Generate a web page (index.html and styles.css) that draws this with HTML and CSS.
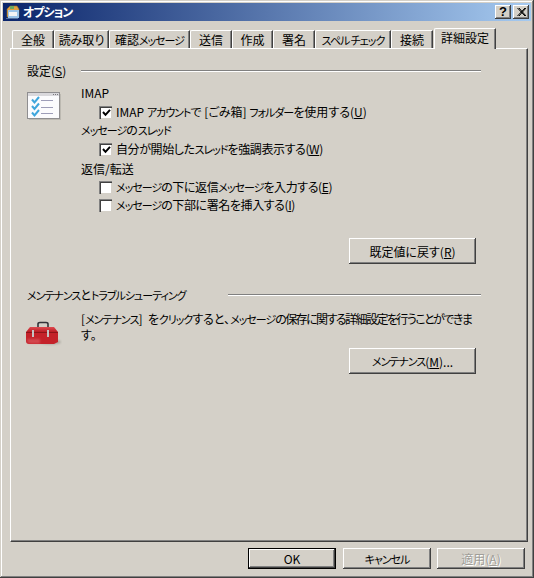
FILE: index.html
```html
<!DOCTYPE html>
<html lang="ja">
<head>
<meta charset="utf-8">
<title>オプション</title>
<link rel="stylesheet" href="styles.css">
</head>
<body>
<div class="window">
  <header class="titlebar">
    <svg class="app-icon" viewBox="0 0 16 16" width="16" height="16">
      <path d="M2 5 L5 2 H12 L14 5 V13 H2 Z" fill="#e0a040" stroke="#8a6a2a" stroke-width="0.6"/>
      <path d="M5 2 H9 V5 H5 Z" fill="#6aa860"/>
      <path d="M3 6 H14 V14 H3 Z" fill="#9cc4e8"/>
      <path d="M4 8 H12 V12 H4 Z" fill="#f4f4f4"/>
      <path d="M1 14 H13 V15 H1 Z" fill="#54709c"/>
    </svg>
    <span class="title">オプション</span>
    <div class="caption-buttons">
      <span class="caption-btn">?</span>
      <span class="caption-btn close">
        <svg viewBox="0 0 9 8" width="9" height="8"><path d="M0.5 0 L8 8 M2 0 L9 8 M8 0 L0.5 8 M9 0 L2 8" stroke="#000" stroke-width="1" fill="none"/></svg>
      </span>
    </div>
  </header>
  <nav class="tabs">
    <span class="tab">全般</span>
    <span class="tab">読み取り</span>
    <span class="tab">確認<span class="k">メッセージ</span></span>
    <span class="tab">送信</span>
    <span class="tab">作成</span>
    <span class="tab">署名</span>
    <span class="tab"><span class="k">スペル チェック</span></span>
    <span class="tab">接続</span>
    <span class="tab active">詳細設定</span>
  </nav>
  <main class="panel">
    <div class="group-head"><span>設定(<u>S</u>)</span><i class="rule first"></i></div>
    <section class="group">
      <svg class="big-icon list-icon" viewBox="0 0 34 28" width="34" height="28">
        <rect x="2" y="2" width="32" height="26" fill="#bcb9b1"/>
        <rect x="0.5" y="0.5" width="32" height="26" fill="#fbfbfd" stroke="#8f8e90"/>
        <rect x="1" y="1" width="31" height="3" fill="#d9d8dc"/>
        <path d="M26 2.5h1M28 2.5h1M30 2.5h1" stroke="#77777c"/>
        <path d="M5 7.5 L7.5 10.5 L12 5 M5 14 L7.5 17 L12 11.5 M5 20.5 L7.5 23.5 L12 18" fill="none" stroke="#3fa6dc" stroke-width="2"/>
        <path d="M14 8.5H26M14 15.5H26M14 21.5H26" stroke="#9d9db8" stroke-width="1"/>
      </svg>
      <div class="group-body">
        <div class="row">IMAP</div>
        <div class="row option gap1"><span class="check on"><svg viewBox="0 0 9 9" width="9" height="9"><path d="M1 4 L3.5 6.8 L8 1.8" fill="none" stroke="#000" stroke-width="2"/></svg></span><span>IMAP <span class="k">アカウント</span>で [ごみ箱] <span class="k">フォルダー</span>を使用する(<u>U</u>)</span></div>
        <div class="row"><span><span class="k">メッセージ</span>の<span class="k">スレッド</span></span></div>
        <div class="row option gap1"><span class="check on"><svg viewBox="0 0 9 9" width="9" height="9"><path d="M1 4 L3.5 6.8 L8 1.8" fill="none" stroke="#000" stroke-width="2"/></svg></span><span class="tight">自分が開始した<span class="k">スレッド</span>を強調表示する(<u>W</u>)</span></div>
        <div class="row gap2">返信/転送</div>
        <div class="row option"><span class="check"></span><span class="tight"><span class="k">メッセージ</span>の下に返信<span class="k">メッセージ</span>を入力する(<u>E</u>)</span></div>
        <div class="row option"><span class="check"></span><span class="tight"><span class="k">メッセージ</span>の下部に署名を挿入する(<u>I</u>)</span></div>
      </div>
    </section>
    <div class="action first-action"><span class="btn wide">既定値に戻す(<u>R</u>)</span></div>
    <div class="group-head second"><span><span class="k">メンテナンス</span>と<span class="k">トラブルシューティング</span></span><i class="rule"></i></div>
    <section class="group desc-group">
      <svg class="big-icon tool-icon" viewBox="0 0 36 26" width="36" height="26">
        <defs>
          <filter id="soft" x="-20%" y="-50%" width="140%" height="200%"><feGaussianBlur stdDeviation="1.2"/></filter>
          <linearGradient id="red" x1="0" y1="0" x2="0" y2="1"><stop offset="0" stop-color="#e04a50"/><stop offset="1" stop-color="#b81c24"/></linearGradient>
        </defs>
        <ellipse cx="24" cy="21" rx="11" ry="2.5" fill="#a8a49c" filter="url(#soft)"/>
        <path d="M12 6 V3 Q12 1.5 14 1.5 H20 Q22 1.5 22 3 V6" fill="none" stroke="#33343a" stroke-width="1.6"/>
        <path d="M0 11 L4 6 H28 L32 11 Z" fill="url(#red)"/>
        <path d="M0 11 H32 V21 L28 23 H3 Q0 23 0 20 Z" fill="#c4222a"/>
        <path d="M0 11 H32 V12 H0 Z" fill="#8e1419"/>
        <path d="M1 18 H14 V22.5 H4 Q1 22.5 1 18 Z" fill="#e0686e" opacity="0.55" filter="url(#soft)"/>
        <rect x="6" y="9" width="2" height="7" fill="#c4c4c4"/>
        <rect x="21" y="9" width="2" height="7" fill="#c4c4c4"/>
      </svg>
      <p class="desc">[<span class="k">メンテナンス</span>]&nbsp; を<span class="k">クリック</span>すると、<span class="k">メッセージ</span><span class="squeeze">の保存に関する詳細設定を行うことができま</span><br>す。</p>
    </section>
    <div class="action second-action"><span class="btn wide"><span class="k">メンテナンス</span>(<u>M</u>)...</span></div>
  </main>
  <footer class="footer">
    <span class="btn default">OK</span>
    <span class="btn"><span class="k">キャンセル</span></span>
    <span class="btn disabled">適用(<u>A</u>)</span>
  </footer>
</div>
</body>
</html>
```

FILE: styles.css
```css
* { box-sizing: border-box; }
html, body { margin: 0; padding: 0; }
body {
  width: 534px;
  height: 578px;
  overflow: hidden;
  background: #d4d0c8;
  font-family: "Noto Sans CJK JP", "Noto Sans", sans-serif;
  font-size: 12px;
  font-feature-settings: "palt";
  color: #000;
}
u { text-underline-offset: 1px; }
.k { font-size: 11px; letter-spacing: -1px; }
.tight { letter-spacing: -0.4px; }
.squeeze { letter-spacing: -1.55px; }
.window {
  width: 534px;
  height: 578px;
  padding: 3px;
  display: flex;
  flex-direction: column;
  background: #d4d0c8;
  box-shadow: inset -1px -1px 0 #404040, inset 1px 1px 0 #d4d0c8, inset -2px -2px 0 #808080, inset 2px 2px 0 #fff;
}
.titlebar {
  height: 18px;
  flex: none;
  display: flex;
  align-items: center;
  padding: 0 2px 0 2px;
  background: linear-gradient(90deg, #0a246a, #a6caf0);
  color: #fff;
}
.app-icon { flex: none; }
.title { margin-left: 2px; font-weight: 700; font-size: 12px; line-height: 18px; letter-spacing: -1px; }
.caption-buttons { margin-left: auto; display: flex; gap: 2px; }
.caption-btn {
  width: 16px;
  height: 14px;
  display: flex;
  align-items: center;
  justify-content: center;
  background: #d4d0c8;
  color: #000;
  font-family: "Liberation Sans", sans-serif;
  font-weight: 700;
  font-size: 13px;
  line-height: 14px;
  box-shadow: inset -1px -1px 0 #404040, inset 1px 1px 0 #fff, inset -2px -2px 0 #808080;
}
.tabs {
  flex: none;
  height: 27px;
  margin-left: 9px;
  display: grid;
  grid-template-columns: 42px 55px 81px 42px 41px 42px 76px 42px 64px;
  align-items: end;
  position: relative;
  z-index: 1;
}
.tab {
  height: 18px;
  display: flex;
  align-items: center;
  justify-content: center;
  line-height: 18px;
  border-top: 1px solid #fff;
  border-left: 1px solid #fff;
  border-right: 1px solid #404040;
  box-shadow: inset -1px 0 0 #808080;
  border-top-left-radius: 2px;
  white-space: nowrap;
}
.tab.active {
  height: 21px;
  margin-bottom: -1px;
  background: #d4d0c8;
  padding-bottom: 3px;
  margin-left: 1px;
  margin-right: 1px;
}
.panel {
  flex: 1;
  min-height: 0;
  margin: 0 3px 0 7px;
  padding: 15px 46px 0 16px;
  display: flex;
  flex-direction: column;
  border-top: 1px solid #fff;
  border-left: 1px solid #fff;
  border-right: 1px solid #404040;
  border-bottom: 1px solid #404040;
  box-shadow: inset -1px -1px 0 #808080;
}
.group-head { height: 14px; display: flex; align-items: center; line-height: 14px; white-space: nowrap; }
.group-head.second { margin-top: 24px; }
.rule {
  display: block;
  height: 2px;
  flex: none;
  margin-left: auto;
  background: linear-gradient(#808080 50%, #fff 50%);
}
.rule.first { width: 400px; }
.group-head.second .rule { width: 253px; }
.group { display: flex; margin-top: 6px; }
.desc-group { margin-top: 9px; height: 30px; }
.big-icon { flex: none; }
.list-icon { margin-top: 8px; margin-right: 20px; }
.tool-icon { margin-top: 10px; margin-right: 19px; margin-left: -1px; }
.group-body { flex: 1; }
.row { height: 18px; line-height: 18px; display: flex; align-items: center; white-space: nowrap; }
.gap1 { margin-top: 1px; }
.gap2 { margin-top: 2px; }
.option { padding-left: 18px; gap: 4px; }
.check {
  width: 13px;
  height: 13px;
  flex: none;
  display: flex;
  align-items: center;
  justify-content: center;
  background: #fff;
  border-top: 1px solid #808080;
  border-left: 1px solid #808080;
  box-shadow: inset 1px 1px 0 #404040, inset -1px -1px 0 #d4d0c8;
}
.desc { margin: 0; line-height: 15px; white-space: nowrap; }
.action { display: flex; justify-content: flex-end; padding-right: 5px; }
.first-action { margin-top: 24px; }
.second-action { margin-top: 7px; }
.btn {
  width: 88px;
  height: 21px;
  display: flex;
  align-items: center;
  justify-content: center;
  background: #d4d0c8;
  white-space: nowrap;
  box-shadow: inset -1px -1px 0 #404040, inset 1px 1px 0 #fff, inset -2px -2px 0 #808080;
}
.btn.wide { width: 127px; height: 26px; }
.btn.default {
  margin-right: 1px;
  box-shadow: inset 0 0 0 1px #000, inset -2px -2px 0 #404040, inset 2px 2px 0 #fff, inset -3px -3px 0 #808080;
}
.btn.disabled { color: #a09e98; text-shadow: 1px 1px 0 #fff; }
.footer {
  flex: none;
  height: 33px;
  display: flex;
  justify-content: flex-end;
  gap: 6px;
  padding: 6px 6px 0 0;
}
```
